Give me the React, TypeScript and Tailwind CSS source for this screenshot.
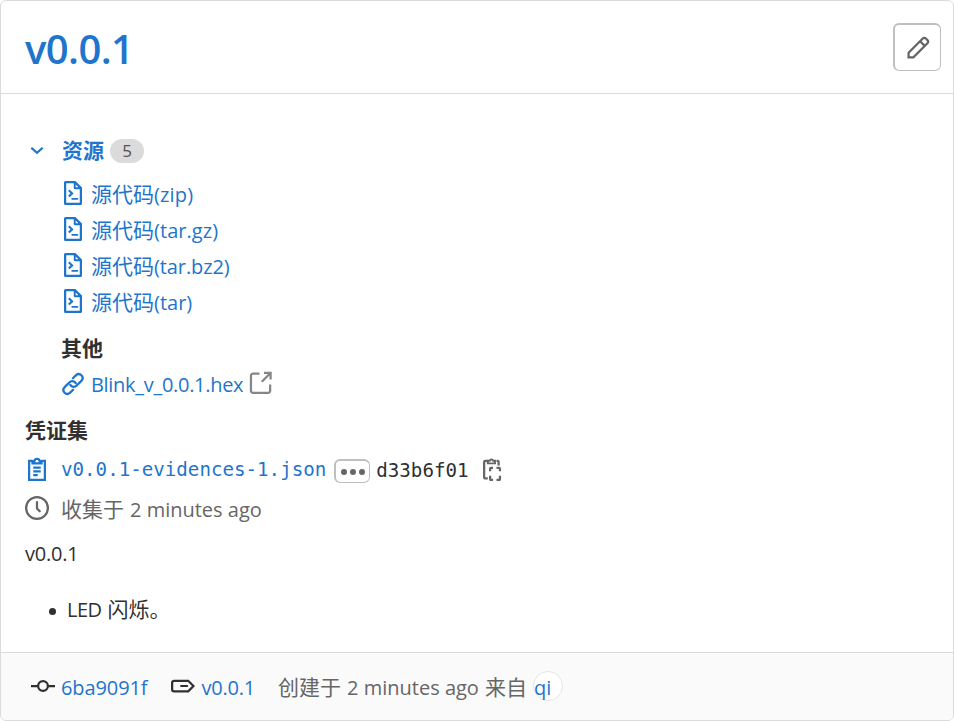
import type { ReactNode } from 'react';

const sans = "font-['Open_Sans','Noto_Sans_CJK_SC',sans-serif]";
const mono = "font-['DejaVu_Sans_Mono','Liberation_Mono',monospace]";

function Icon({ children, className = '', size = 24 }: { children: ReactNode; className?: string; size?: number }) {
  return (
    <svg
      viewBox="0 0 16 16"
      width={size}
      height={size}
      fill="none"
      stroke="currentColor"
      strokeWidth="1.5"
      className={'shrink-0 ' + className}
    >
      {children}
    </svg>
  );
}

function CodeFileIcon() {
  return (
    <Icon className="-mt-0.5">
      <path fill="currentColor" stroke="none" fillRule="evenodd" d="M3 0a1 1 0 0 0-1 1v14a1 1 0 0 0 1 1h10a1 1 0 0 0 1-1V4.4L9.6 0H3Zm.5 1.5h5V4.500a1 1 0 0 0 1 1h3v9h-9v-13Zm6.300.9L11.600 4.200H9.800V2.400Z" />
      <path d="m5.200 6.200 2.200 2.050-2.200 2.050" strokeWidth="1.4" />
      <path d="M7.500 11.900h3.400" strokeWidth="1.3" strokeLinecap="round" />
    </Icon>
  );
}

function AssetRow({ ext, tracking }: { ext: string; tracking: string }) {
  return (
    <li className="flex h-9 items-center text-[#1f75cb]">
      <CodeFileIcon />
      <a className="ml-1.5 flex items-center">
        <span className="text-[21px]">源代码</span>
        <span className={'mt-0.5 text-[20px] ' + tracking}>{ext}</span>
      </a>
    </li>
  );
}

export default function App() {
  return (
    <article className={`flex h-[721px] w-[954px] flex-col overflow-hidden rounded-md border border-[#dbdbdb] bg-white text-[20px] leading-9 text-[#303030] ${sans}`}>
      <header className="flex h-[93px] shrink-0 items-center justify-between border-b border-[#dbdbdb] pr-3 pl-6">
        <h2 className="mt-1 text-[40px] leading-none font-semibold tracking-[-0.6px] text-[#1f75cb]">v0.0.1</h2>
        <button className="flex size-12 items-center justify-center rounded-md border-t-2 border-r border-b border-l-2 border-[#bfbfbf] text-[#666]">
          <Icon>
            <path d="m1.700 14.300.05-3.200L11 1.850a1.700 1.700 0 0 1 2.400 0l.75.75a1.700 1.700 0 0 1 0 2.400L4.900 14.250l-3.200.05ZM9.400 3.500l3.100 3.100" />
          </Icon>
        </button>
      </header>

      <section className="flex-1 pl-6">
        <div className="mt-[38px] flex h-9 items-center text-[#1f75cb]">
          <Icon><path d="m4.200 6.500 3.800 3.400 3.800-3.400" /></Icon>
          <h3 className="ml-[13px] text-[21px] font-bold">资源</h3>
          <span className="mt-0.5 ml-1.5 flex h-6 w-[34px] items-center justify-center rounded-full bg-[#dbdbdb] text-[17px] text-[#525252]">5</span>
        </div>

        <ul className="mt-2 pl-9">
          <AssetRow ext="(zip)" tracking="tracking-[0.15px]" />
          <AssetRow ext="(tar.gz)" tracking="tracking-[0.05px]" />
          <AssetRow ext="(tar.bz2)" tracking="tracking-[-0.1px]" />
          <AssetRow ext="(tar)" tracking="tracking-[0px]" />
        </ul>

        <div className="mt-2.5 pl-9">
          <h3 className="h-9 text-[21px] font-bold">其他</h3>
          <div className="mt-px flex h-9 items-center text-[#1f75cb]">
            <Icon className="-mt-[3px]">
              <g transform="scale(0.6667)" strokeWidth="2.300" strokeLinecap="round">
                <path d="M9.300 12.900a4 4 0 0 0 6.400.6l4.900-4.900a3.900 3.900 0 0 0-5.500-5.500l-3.200 3.200" />
                <path d="M14.700 11.100a4 4 0 0 0-6.400-.6l-4.900 4.900a3.900 3.900 0 0 0 5.500 5.500l3.200-3.200" />
              </g>
            </Icon>
            <a className="ml-1.5 tracking-[-0.3px]">Blink_v_0.0.1.hex</a>
            <Icon className="-mt-1 ml-1.5 text-[#868686]">
              <path d="M7 1.800H2.700a1.400 1.400 0 0 0-1.400 1.400v10a1.400 1.400 0 0 0 1.400 1.400h10a1.400 1.400 0 0 0 1.400-1.400V9M10 1.250h4.400v4.400M14.200 1.500 8.500 7.200" />
            </Icon>
          </div>
        </div>

        <h3 className="mt-[9px] h-9 text-[21px] font-bold">凭证集</h3>
        <div className={`mt-1 flex h-9 items-center text-[19.160px] ${mono}`}>
          <Icon className="-mt-0.5 text-[#1f75cb]">
            <path d="M5 2.500H2.750v12.750h10.500V2.500H11M5.500 7h5M5.500 9.500h5M5.500 12h3" />
            <path d="M5 4.250V2.700h1.200a1.850 1.850 0 0 1 3.600 0H11v1.550H5Z" />
          </Icon>
          <a className="ml-3 text-[#1f75cb]">v0.0.1-evidences-1.json</a>
          <button className="mt-0.5 ml-2 flex h-6 w-9 items-center justify-center gap-[3px] rounded-md border-t-2 border-r border-b border-l-2 border-[#bfbfbf]">
            <i className="size-1.5 rounded-full bg-[#666]" />
            <i className="size-1.5 rounded-full bg-[#666]" />
            <i className="size-1.5 rounded-full bg-[#666]" />
          </button>
          <span className="mt-0.5 ml-1.5">d33b6f01</span>
          <Icon className="-mt-0.5 ml-[11px] text-[#666]">
            <path d="M5.200 14.300H3.500a.75.75 0 0 1-.75-.75V3.250a.75.75 0 0 1 .75-.75H5M11 2.500h.8a.6.6 0 0 1 .6.600v2.600" />
            <path d="M5.200 4.250V2.500h1.200a1.250 1.250 0 0 1 2.400 0H10v1.750H5.200Z" strokeWidth="1.300" />
            <path d="M6.750 9.500V7.750a.5.5 0 0 1 .5-.5H8.700M11 7.250h1.800a.5.5 0 0 1 .5.5V9.500M13.300 12.500v2.250a.5.5 0 0 1-.5.5H11M8.700 15.250H7.250a.5.5 0 0 1-.5-.5V12.500" />
          </Icon>
        </div>
        <div className="mt-1 flex h-9 items-center text-[#666]">
          <Icon className="-mt-1">
            <circle cx="8" cy="8" r="7.250" />
            <path d="M8 4v4.300l1.800 1.900" strokeLinecap="round" />
          </Icon>
          <span className="-mt-0.5 ml-3 text-[21px]">收集于</span>
          <span className="ml-1.5 tracking-[0px]">2 minutes ago</span>
        </div>

        <p className="mt-2 h-9 tracking-[-0.2px]">v0.0.1</p>
        <ul className="mt-5">
          <li className="flex h-9 items-center pl-6">
            <i className="mt-0.5 size-[7px] rounded-full bg-[#303030]" />
            <span className="ml-[11px] tracking-[-0.5px]">LED</span>
            <span className="-mt-0.5 ml-1.5 text-[21px]">闪烁。</span>
          </li>
        </ul>
      </section>

      <footer className="flex h-[68px] shrink-0 items-center border-t border-[#dbdbdb] bg-[#fafafa] pl-[30px] text-[#666]">
        <Icon className="-mt-0.5 text-[#303030]">
          <circle cx="8" cy="8" r="3.250" />
          <path d="M0 8h4.500M11.500 8H16" />
        </Icon>
        <a className="mt-0.5 ml-1.5 tracking-[-0.1px] text-[#1f75cb]">6ba9091f</a>
        <Icon className="-mt-0.5 ml-6 text-[#303030]">
          <path d="M2 4.500h9.500L15 8l-3.500 3.500H2A1.250 1.250 0 0 1 .75 10.250V5.750A1.250 1.250 0 0 1 2 4.500Z" />
          <path d="M6.700 8h4.100" strokeLinecap="round" strokeWidth="1.300" />
        </Icon>
        <a className="mt-0.5 ml-1.5 tracking-[-0.2px] text-[#1f75cb]">v0.0.1</a>
        <span className="ml-[23px] text-[21px]">创建于</span>
        <span className="mt-0.5 ml-1.5 tracking-[0px]">2 minutes ago</span>
        <span className="ml-1.5 text-[21px]">来自</span>
        <a className="-mt-0.5 ml-1.5 flex size-[30px] items-center rounded-full border border-[#e5e5e5] bg-white pt-1 text-[#1f75cb]">qi</a>
      </footer>
    </article>
  );
}
